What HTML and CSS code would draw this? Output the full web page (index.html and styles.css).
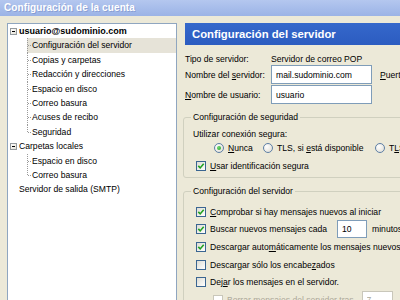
FILE: index.html
```html
<!DOCTYPE html>
<html>
<head>
    <meta charset="UTF-8">
    <title>Configuración de la cuenta</title>
    <link rel="stylesheet" href="styles.css">
</head>
<body>
    <div class="window">
        <div class="titlebar">Configuración de la cuenta</div>

        <div class="main">
            <div class="tree">
                <div class="row"><span class="twisty"></span><b>usuario@sudominio.com</b></div>
                <ul class="children">
                    <li class="selected">Configuración del servidor</li>
                    <li>Copias y carpetas</li>
                    <li>Redacción y direcciones</li>
                    <li>Espacio en disco</li>
                    <li>Correo basura</li>
                    <li>Acuses de recibo</li>
                    <li>Seguridad</li>
                </ul>
                <div class="row"><span class="twisty"></span><span>Carpetas locales</span></div>
                <ul class="children">
                    <li>Espacio en disco</li>
                    <li>Correo basura</li>
                </ul>
                <div class="row leaf">Servidor de salida (SMTP)</div>
            </div>

            <div class="panel">
                <div class="panel-header">Configuración del servidor</div>

                <div class="fields">
                    <div class="field info">
                        <span class="label">Tipo de servidor:</span>
                        <span>Servidor de correo POP</span>
                    </div>
                    <div class="field">
                        <label class="label">Nombre del <u>s</u>ervidor:</label>
                        <input class="textbox" type="text" value="mail.sudominio.com">
                        <span class="port"><u>P</u>uerto:</span>
                    </div>
                    <div class="field second">
                        <label class="label"><u>N</u>ombre de usuario:</label>
                        <input class="textbox" type="text" value="usuario">
                    </div>
                </div>

                <fieldset class="group security">
                    <legend>Configuración de seguridad</legend>
                    <div class="line">Utilizar conexión segura:</div>
                    <div class="radios">
                        <span class="option never"><span class="radio on"></span><span><u>N</u>unca</span></span>
                        <span class="option maybe"><span class="radio"></span><span>TLS, si <u>e</u>stá disponible</span></span>
                        <span class="option"><span class="radio"></span><span>T<u>L</u>S</span></span>
                    </div>
                    <div class="check-row">
                        <span class="check on"><svg viewBox="0 0 8 8"><path d="M1.3 3.9 L3.2 5.9 L6.7 1.8"/></svg></span>
                        <span><u>U</u>sar identificación segura</span>
                    </div>
                </fieldset>

                <fieldset class="group server">
                    <legend>Configuración del servidor</legend>
                    <div class="check-row">
                        <span class="check on"><svg viewBox="0 0 8 8"><path d="M1.3 3.9 L3.2 5.9 L6.7 1.8"/></svg></span>
                        <span><u>C</u>omprobar si hay mensajes nuevos al iniciar</span>
                    </div>
                    <div class="check-row">
                        <span class="check on"><svg viewBox="0 0 8 8"><path d="M1.3 3.9 L3.2 5.9 L6.7 1.8"/></svg></span>
                        <span>Buscar nuevos mensajes cada</span>
                        <input class="textbox small" type="text" value="10">
                        <span class="unit">minutos</span>
                    </div>
                    <div class="check-row">
                        <span class="check on"><svg viewBox="0 0 8 8"><path d="M1.3 3.9 L3.2 5.9 L6.7 1.8"/></svg></span>
                        <span>Descargar auto<u>m</u>áticamente los mensajes nuevos</span>
                    </div>
                    <div class="check-row">
                        <span class="check"></span>
                        <span>Descargar sólo los encabe<u>z</u>ados</span>
                    </div>
                    <div class="check-row">
                        <span class="check"></span>
                        <span>Dej<u>a</u>r los mensajes en el servidor.</span>
                    </div>
                    <div class="check-row disabled">
                        <span class="check"></span>
                        <span>Borrar mensajes del servidor tras</span>
                        <input class="textbox days" type="text" value="7" disabled>
                    </div>
                </fieldset>
            </div>
        </div>
    </div>
</body>
</html>
```

FILE: styles.css
```css
* {
    margin: 0;
    padding: 0;
    box-sizing: border-box;
}

html, body {
    width: 400px;
    height: 300px;
    overflow: hidden;
    background-color: #ece9d8;
}

body {
    font-family: "Liberation Sans", Arial, sans-serif;
    font-size: 8.6px;
    color: #000;
}

u {
    text-underline-offset: 1px;
}

.titlebar {
    height: 16px;
    line-height: 16px;
    padding-left: 4px;
    color: #fff;
    font-size: 10px;
    font-weight: bold;
    letter-spacing: 0.1px;
    background: linear-gradient(to bottom, #b4c7ef, #9bb3e6);
    text-shadow: 1px 1px 0 rgba(90, 110, 170, 0.35);
}

.main {
    display: flex;
    gap: 8px;
    padding: 7px 0 0 7px;
    height: 284px;
}

/* account tree */

.tree {
    width: 170px;
    flex-shrink: 0;
    height: 300px;
    background-color: #fff;
    border: 1px solid #8fa6c0;
    white-space: nowrap;
}

.row {
    display: flex;
    align-items: center;
    height: 14.4px;
}

.row.leaf {
    padding-left: 11px;
}

.twisty {
    width: 7px;
    height: 7px;
    margin: 0 2px;
    border: 1px solid #949a9e;
    background: linear-gradient(135deg, #fff, #e4e1d6);
    display: flex;
    align-items: center;
    justify-content: center;
}

.twisty::after {
    content: "";
    width: 3px;
    height: 1px;
    background-color: #000;
}

.row b {
    font-size: 9px;
}

.children {
    list-style: none;
    margin-left: 19px;
}

.children li {
    height: 14.4px;
    line-height: 14.4px;
    padding-left: 5px;
    background-image:
        repeating-linear-gradient(to bottom, #9a9a9a 0 1px, transparent 1px 2px),
        repeating-linear-gradient(to right, #9a9a9a 0 1px, transparent 1px 2px);
    background-size: 1px 100%, 4px 1px;
    background-position: 0 0, 1px 7px;
    background-repeat: no-repeat;
}

.children li:last-child {
    background-size: 1px 8px, 4px 1px;
}

.children li.selected {
    background-color: #e6e3d8;
}

/* right panel */

.panel {
    width: 240px;
    flex-shrink: 0;
    white-space: nowrap;
}

.panel-header {
    height: 22px;
    line-height: 22px;
    padding-left: 7px;
    color: #fff;
    font-size: 11.3px;
    font-weight: bold;
    background: linear-gradient(to bottom, #3568cb, #2c5cc0);
}

.fields {
    display: flex;
    flex-direction: column;
    padding-top: 8px;
}

.field {
    display: flex;
    align-items: center;
    height: 19px;
}

.field.info {
    height: 12px;
}

.field.second {
    margin-top: 1px;
}

.label {
    width: 86px;
    flex-shrink: 0;
}

.textbox {
    height: 19px;
    width: 101px;
    padding: 0 4px;
    border: 1px solid #7f9db9;
    background-color: #fff;
    font: inherit;
    color: #000;
    outline: none;
}

.port {
    margin-left: 8px;
}

/* group boxes */

.group {
    margin-left: -2px;
    width: 240px;
    border: 1px solid #d0d0bf;
    border-radius: 3px;
    padding: 4px 0 4px 9px;
}

.group legend {
    line-height: 12px;
    padding: 0 2px;
    margin-left: -2px;
}

.security {
    margin-top: 7px;
}

.server {
    margin-top: 7px;
    padding-top: 6px;
    padding-bottom: 0;
    height: 140px;
}

.line {
    height: 14px;
    line-height: 14px;
}

.radios {
    display: flex;
    align-items: center;
    height: 14px;
    padding-left: 21px;
}

.option {
    display: flex;
    align-items: center;
}

.option.never {
    width: 49px;
}

.option.maybe {
    width: 112px;
}

.radio {
    width: 10px;
    height: 10px;
    flex-shrink: 0;
    margin-right: 4px;
    border: 1px solid #5d7fa6;
    border-radius: 50%;
    background: radial-gradient(circle at 35% 35%, #fff, #dcdad0);
    display: flex;
    align-items: center;
    justify-content: center;
}

.radio.on::after {
    content: "";
    width: 4px;
    height: 4px;
    border-radius: 50%;
    background: radial-gradient(circle at 35% 35%, #6ed66e, #21a121);
}

.check-row {
    display: flex;
    align-items: center;
    height: 17.6px;
}

.security .check-row {
    height: 14px;
    margin-top: 4px;
}

.check {
    width: 10px;
    height: 10px;
    flex-shrink: 0;
    margin: 0 4px 0 3px;
    border: 1px solid #3a6591;
    background: linear-gradient(135deg, #dcdcd4, #fff);
    display: flex;
    align-items: center;
    justify-content: center;
}

.check svg {
    width: 8px;
    height: 8px;
}

.check svg path {
    fill: none;
    stroke: #21a121;
    stroke-width: 1.6;
}

.textbox.small {
    width: 30px;
    height: 18px;
    margin-left: 10px;
}

.unit {
    margin-left: 5px;
}

.check-row.disabled {
    color: #aca899;
}

.check-row.disabled .check {
    margin-left: 20px;
    border-color: #c9c7ba;
    background: #fff;
}

.textbox.days {
    width: 31px;
    height: 18px;
    margin-left: 8px;
    color: #aca899;
    border-color: #c9c7ba;
    background-color: #fff;
}
```
